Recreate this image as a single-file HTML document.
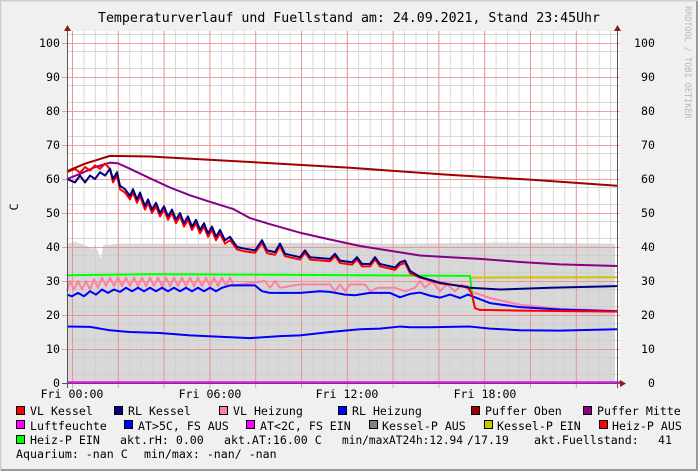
<!DOCTYPE html>
<html><head><meta charset="utf-8"><style>
html,body{margin:0;padding:0;background:#f0f0f0}
svg{display:block}
text{font-family:"DejaVu Sans Mono","Liberation Mono",monospace;fill:#000}
.l{font-size:11.6px}
</style></head><body>
<svg width="698" height="471" viewBox="0 0 698 471" xmlns="http://www.w3.org/2000/svg">
<rect x="0" y="0" width="698" height="471" fill="#f0f0f0"/>
<path d="M0.5 470.5V0.5H697.5" stroke="#cfcfcf" stroke-width="2" fill="none"/>
<path d="M1 470H697V1" stroke="#9a9a9a" stroke-width="2" fill="none"/>
<text x="349" y="22" text-anchor="middle" font-size="13.2" textLength="502" lengthAdjust="spacingAndGlyphs">Temperaturverlauf und Fuellstand am: 24.09.2021, Stand 23:45Uhr</text>
<text transform="translate(685,6) rotate(90)" font-size="8.5" style="fill:#b8b8b8">RRDTOOL / TOBI OETIKER</text>
<rect x="67" y="31" width="553" height="352" fill="#fff"/>
<g transform="translate(0,383) scale(1,-3.4)">
<path d="M67 0 L67 41 L75 41.5 L85 40.5 L92 39.5 L95 40.5 L99 38 L101 36.5 L103 40.5 L120 41 L200 41 L300 41.2 L400 41 L500 41.3 L615 41 L615 0 Z" fill="#d8d8d8"/>
</g>
<g stroke="#cfcfcf" stroke-width="1" opacity="0.8">
<path d="M67 374.5H620M67 357.5H620M67 340.5H620M67 323.5H620M67 306.5H620M67 289.5H620M67 272.5H620M67 255.5H620M67 238.5H620M67 221.5H620M67 204.5H620M67 187.5H620M67 170.5H620M67 153.5H620M67 136.5H620M67 119.5H620M67 102.5H620M67 85.5H620M67 68.5H620M67 51.5H620M67 34.5H620"/>
<path d="M72.5 31V383M83.9 31V383M95.4 31V383M106.8 31V383M118.3 31V383M129.7 31V383M141.2 31V383M152.6 31V383M164.1 31V383M175.5 31V383M187 31V383M198.4 31V383M209.9 31V383M221.3 31V383M232.8 31V383M244.2 31V383M255.7 31V383M267.1 31V383M278.6 31V383M290 31V383M301.5 31V383M312.9 31V383M324.4 31V383M335.8 31V383M347.3 31V383M358.7 31V383M370.2 31V383M381.6 31V383M393.1 31V383M404.5 31V383M416 31V383M427.4 31V383M438.9 31V383M450.3 31V383M461.8 31V383M473.2 31V383M484.7 31V383M496.1 31V383M507.6 31V383M519 31V383M530.5 31V383M541.9 31V383M553.4 31V383M564.8 31V383M576.3 31V383M587.7 31V383M599.2 31V383M610.6 31V383"/>
</g>
<g stroke="#f08080" stroke-width="1" opacity="0.75">
<path d="M62 349.5H620M62 315.5H620M62 281.5H620M62 247.5H620M62 213.5H620M62 179.5H620M62 145.5H620M62 111.5H620M62 77.5H620M62 43.5H620"/>
<path d="M72.5 31V388M118.3 31V388M164.1 31V388M209.9 31V388M255.7 31V388M301.5 31V388M347.3 31V388M393.1 31V388M438.9 31V388M484.7 31V388M530.5 31V388M576.3 31V388"/>
</g>
<g transform="translate(0,383) scale(1,-3.4)" fill="none" stroke-width="2" stroke-linejoin="round">
<polyline vector-effect="non-scaling-stroke" stroke="#0000ff" points="67,16.6 90,16.5 110,15.5 130,15 160,14.7 190,14 220,13.6 250,13.2 280,13.8 300,14 330,15 360,15.8 380,16 400,16.6 410,16.4 430,16.4 470,16.6 490,16 520,15.5 560,15.4 617,15.8"/>
<polyline vector-effect="non-scaling-stroke" stroke="#ff80a0" points="67,27 70,30 74,27.5 78,30 82,27.5 86,30 90,27.5 94,30.5 98,28 102,31 106,28.5 110,31 114,28.5 118,31 122,28.5 126,31 130,28.5 134,31 138,28.5 142,31 146,28.5 150,31 154,28.5 158,31 162,28.5 166,31 170,28.5 174,31 178,28.5 182,31 186,28.5 190,31 194,28.5 198,31 202,28.5 206,31 210,28.5 214,31 218,28.5 222,31 226,28.5 230,31 234,28.5 240,29 265,30 270,28 275,30 280,28 300,29 330,29 335,27 340,29 345,27 350,29 365,29 370,27 378,28 395,28 405,27 415,28 420,30 425,28 432,30 440,27 447,29 455,27 462,29 470,27 490,25 520,23 560,21.8 617,21.2"/>
<polyline vector-effect="non-scaling-stroke" stroke="#0000ff" points="67,26 72,25.5 78,26.5 84,25.5 90,27 96,26 102,27.5 108,26.5 114,27.5 120,26.8 126,28 132,27 138,28 144,27 150,28 156,27 162,28 168,27 174,28 180,27 186,28 192,27 198,28 204,27 210,28 216,27 222,28 230,28.7 255,28.7 262,27 270,26.5 300,26.5 320,27 330,26.8 345,26 355,25.8 370,26.5 390,26.5 400,25.2 410,26.2 420,26.6 430,25.7 440,25.1 450,26 460,25 468,26 475,25.2 490,23.5 520,22.3 560,21.6 617,21.1"/>
<polyline vector-effect="non-scaling-stroke" stroke="#c8c800" points="470,31 617,31.1"/>
<polyline vector-effect="non-scaling-stroke" stroke="#00ff00" points="67,31.7 150,32 300,31.8 470,31.5 472,26 474,23"/>
<polyline vector-effect="non-scaling-stroke" stroke="#880088" points="67,60 80,61.5 95,63.5 110,64.8 118,64.6 130,63 150,60.2 170,57.5 190,55.2 210,53.3 233,51.2 250,48.5 270,46.7 300,44.2 330,42.2 360,40.3 390,38.9 420,37.5 450,37 480,36.5 520,35.6 560,34.9 617,34.4"/>
<polyline vector-effect="non-scaling-stroke" stroke="#ff0000" points="67,62 75,63 80,61.8 85,63.5 90,62.5 95,64 100,63 105,64.5 110,63 113,59 117,61 120,57 125,56 130,54 133,56 137,53 140,55 145,51 148,53 152,50 156,52 160,49 164,51 168,48 172,50 176,47 180,49 184,46 188,48 192,45 196,47 200,44 204,46 208,43 212,45 216,42 220,44 225,41 230,42 237,39.3 245,38.7 255,38.3 262,41.2 267,38.2 275,37.7 280,40.3 285,37.3 300,36.3 305,38.3 310,36.3 330,35.8 335,37.3 340,35.3 352,34.8 357,36.3 362,34.3 370,34.3 375,36.3 380,34.3 395,33.3 400,34.8 405,35.3 410,32.3 420,31 440,29.3 468,28.3 472,26 475,22 480,21.5 520,21.3 617,21"/>
<polyline vector-effect="non-scaling-stroke" stroke="#000080" points="67,60 75,59 80,61 85,59 90,61 95,60 100,62 105,61 110,63 113,60 117,62 120,58 125,57 130,55 133,57 137,54 140,56 145,52 148,54 152,51 156,53 160,50 164,52 168,49 172,51 176,48 180,50 184,47 188,49 192,46 196,48 200,45 204,47 208,44 212,46 216,43 220,45 225,42 230,43 237,40 245,39.5 255,39 262,42 267,39 275,38.5 280,41 285,38 300,37 305,39 310,37 330,36.5 335,38 340,36 352,35.5 357,37 362,35 370,35 375,37 380,35 395,34 400,35.5 405,36 410,33 420,31.2 440,29.5 470,28 500,27.5 550,28 617,28.5"/>
<polyline vector-effect="non-scaling-stroke" stroke="#a00000" points="67,62.3 85,64.5 110,66.8 150,66.6 250,65 350,63.3 450,61.2 530,59.8 617,58"/>
</g>
<path d="M67 382.5H620" stroke="#ff00ff" stroke-width="2.5"/>
<path d="M67.5 30V388M617.5 30V388M62 383.5H621" stroke="#555" stroke-width="1"/>
<path d="M64 31L67.5 25L71 31Z M614 31L617.5 25L621 31Z M620 380L626 383.5L620 387Z" fill="#8b1a1a"/>
<g class="l" text-anchor="end">
<text x="60" y="47">100</text><text x="60" y="81">90</text><text x="60" y="115">80</text><text x="60" y="149">70</text><text x="60" y="183">60</text><text x="60" y="217">50</text><text x="60" y="251">40</text><text x="60" y="285">30</text><text x="60" y="319">20</text><text x="60" y="353">10</text><text x="60" y="387">0</text>
<text x="655" y="47">100</text><text x="655" y="81">90</text><text x="655" y="115">80</text><text x="655" y="149">70</text><text x="655" y="183">60</text><text x="655" y="217">50</text><text x="655" y="251">40</text><text x="655" y="285">30</text><text x="655" y="319">20</text><text x="655" y="353">10</text><text x="655" y="387">0</text>
</g>
<text class="l" transform="translate(18,207) rotate(-90)" text-anchor="middle">C</text>
<g class="l" text-anchor="middle">
<text x="72" y="398">Fri 00:00</text><text x="210" y="398">Fri 06:00</text><text x="347" y="398">Fri 12:00</text><text x="485" y="398">Fri 18:00</text>
</g>
<g stroke="#000" stroke-width="1">
<rect x="16.5" y="406.5" width="8" height="8" fill="#ff0000"/>
<rect x="114.5" y="406.5" width="8" height="8" fill="#000080"/>
<rect x="219.5" y="406.5" width="8" height="8" fill="#ff80a0"/>
<rect x="338.5" y="406.5" width="8" height="8" fill="#0000ff"/>
<rect x="471.5" y="406.5" width="8" height="8" fill="#a00000"/>
<rect x="583.5" y="406.5" width="8" height="8" fill="#880088"/>
<rect x="16.5" y="420.5" width="8" height="8" fill="#ff00ff"/>
<rect x="124.5" y="420.5" width="8" height="8" fill="#0000ff"/>
<rect x="246.5" y="420.5" width="8" height="8" fill="#ff00ff"/>
<rect x="369.5" y="420.5" width="8" height="8" fill="#808080"/>
<rect x="484.5" y="420.5" width="8" height="8" fill="#c8c800"/>
<rect x="599.5" y="420.5" width="8" height="8" fill="#ff0000"/>
<rect x="16.5" y="435.5" width="8" height="8" fill="#00ff00"/>
</g>
<g class="l">
<text x="30" y="415">VL Kessel</text><text x="128" y="415">RL Kessel</text><text x="233" y="415">VL Heizung</text><text x="352" y="415">RL Heizung</text><text x="485" y="415">Puffer Oben</text><text x="597" y="415">Puffer Mitte</text>
<text x="30" y="430">Luftfeuchte</text><text x="138" y="430">AT&gt;5C, FS AUS</text><text x="260" y="430">AT&lt;2C, FS EIN</text><text x="382" y="430">Kessel-P AUS</text><text x="497" y="430">Kessel-P EIN</text><text x="612" y="430">Heiz-P AUS</text>
<text x="30" y="444">Heiz-P EIN</text><text x="120" y="444">akt.rH: 0.00</text><text x="224" y="444">akt.AT:16.00 C</text><text x="342" y="444" textLength="121" lengthAdjust="spacingAndGlyphs">min/maxAT24h:12.94</text><text x="467" y="444">/17.19</text><text x="534" y="444">akt.Fuellstand:</text><text x="658" y="444">41</text>
<text x="16" y="458">Aquarium: -nan C</text><text x="144" y="458">min/max: -nan/ -nan</text>
</g>
</svg>
</body></html>
